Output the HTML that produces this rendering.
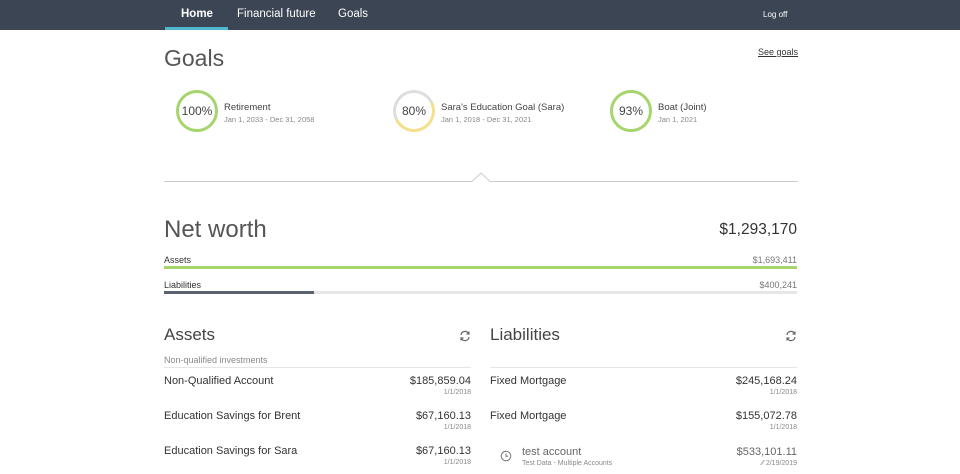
<!DOCTYPE html>
<html><head><style>
*{margin:0;padding:0;box-sizing:border-box}
body{width:960px;height:474px;overflow:hidden;background:#fff;font-family:"Liberation Sans",sans-serif;color:#333;position:relative}
.a{position:absolute;white-space:nowrap}
nav{position:absolute;left:0;top:0;width:960px;height:30px;background:#3b4553}
nav span{position:absolute;top:8px;font-size:11.5px;color:#fff}
.circ{position:absolute;width:42px;height:42px;border-radius:50%;border:3px solid #a6d56e;font-size:12px;color:#444;text-align:center;line-height:36px}
.gt{font-size:9.5px;color:#444}
.gs{font-size:7.5px;color:#888}
.amt{font-size:11px;color:#333}
.dt{font-size:7px;color:#888}
.nm{font-size:11px;color:#333}
</style></head><body>
<nav>
<span style="left:181px;font-weight:bold">Home</span>
<span style="left:237px">Financial future</span>
<span style="left:338px">Goals</span>
<span style="left:763px;font-size:8px;top:10px">Log off</span>
<div class="a" style="left:165px;top:27px;width:63px;height:3px;background:#4fb8d0"></div>
</nav>
<div class="a" style="left:164px;top:45px;font-size:23px;color:#555">Goals</div>
<div class="a" style="left:758px;top:47px;font-size:9px;text-decoration:underline;color:#333">See goals</div>

<div class="circ" style="left:176px;top:90px">100%</div>
<div class="a gt" style="left:224px;top:102px">Retirement</div>
<div class="a gs" style="left:224px;top:115px">Jan 1, 2033 - Dec 31, 2058</div>
<div class="circ" style="left:393px;top:90px;border-color:#f5df8a;border-left-color:#ddd;border-top-color:#ddd;transform:rotate(20deg)"><span style="display:inline-block;transform:rotate(-20deg)">80%</span></div>
<div class="a gt" style="left:441px;top:102px">Sara's Education Goal (Sara)</div>
<div class="a gs" style="left:441px;top:115px">Jan 1, 2018 - Dec 31, 2021</div>
<div class="circ" style="left:610px;top:90px">93%</div>
<div class="a gt" style="left:658px;top:102px">Boat (Joint)</div>
<div class="a gs" style="left:658px;top:115px">Jan 1, 2021</div>

<svg class="a" style="left:164px;top:170px" width="634" height="14"><polyline points="0,11.5 308,11.5 317,3 326,11.5 634,11.5" fill="none" stroke="#ccc" stroke-width="1"/></svg>

<div class="a" style="left:164px;top:216px;font-size:24px;color:#555">Net worth</div>
<div class="a" style="right:163px;top:221px;font-size:15.5px;color:#333">$1,293,170</div>
<div class="a" style="left:164px;top:255px;font-size:9px">Assets</div>
<div class="a" style="right:163px;top:255px;font-size:9px;color:#777">$1,693,411</div>
<div class="a" style="left:164px;top:266px;width:633px;height:3px;background:#a6d56e"></div>
<div class="a" style="left:164px;top:280px;font-size:9px">Liabilities</div>
<div class="a" style="right:163px;top:280px;font-size:9px;color:#777">$400,241</div>
<div class="a" style="left:164px;top:291px;width:633px;height:3px;background:#e6e6e6"></div>
<div class="a" style="left:164px;top:291px;width:150px;height:3px;background:#5b6370"></div>

<div class="a" style="left:164px;top:325px;font-size:17px;color:#444">Assets</div>
<div class="a" style="left:490px;top:325px;font-size:17px;color:#444">Liabilities</div>
<svg class="a" style="left:459px;top:330px" width="12" height="12" viewBox="0 0 12 12"><path d="M2 5A4 4 0 0 1 9.5 3.5M10 7A4 4 0 0 1 2.5 8.5" fill="none" stroke="#666" stroke-width="1.2"/><path d="M10 1.5V4H7.5M2 10.5V8H4.5" fill="none" stroke="#666" stroke-width="1.2"/></svg>
<svg class="a" style="left:785px;top:330px" width="12" height="12" viewBox="0 0 12 12"><path d="M2 5A4 4 0 0 1 9.5 3.5M10 7A4 4 0 0 1 2.5 8.5" fill="none" stroke="#666" stroke-width="1.2"/><path d="M10 1.5V4H7.5M2 10.5V8H4.5" fill="none" stroke="#666" stroke-width="1.2"/></svg>

<div class="a" style="left:164px;top:355px;font-size:9px;color:#888">Non-qualified investments</div>
<div class="a" style="left:164px;top:367px;width:307px;height:1px;background:#e6e6e6"></div>
<div class="a" style="left:490px;top:367px;width:307px;height:1px;background:#e6e6e6"></div>

<div class="a nm" style="left:164px;top:375px">Non-Qualified Account</div>
<div class="a amt" style="right:489px;top:375px">$185,859.04</div>
<div class="a dt" style="right:489px;top:389px">1/1/2018</div>
<div class="a nm" style="left:164px;top:410px">Education Savings for Brent</div>
<div class="a amt" style="right:489px;top:410px">$67,160.13</div>
<div class="a dt" style="right:489px;top:424px">1/1/2018</div>
<div class="a nm" style="left:164px;top:445px">Education Savings for Sara</div>
<div class="a amt" style="right:489px;top:445px">$67,160.13</div>
<div class="a dt" style="right:489px;top:459px">1/1/2018</div>

<div class="a nm" style="left:490px;top:375px">Fixed Mortgage</div>
<div class="a amt" style="right:163px;top:375px">$245,168.24</div>
<div class="a dt" style="right:163px;top:389px">1/1/2018</div>
<div class="a nm" style="left:490px;top:410px">Fixed Mortgage</div>
<div class="a amt" style="right:163px;top:410px">$155,072.78</div>
<div class="a dt" style="right:163px;top:424px">1/1/2018</div>
<svg class="a" style="left:500px;top:450px" width="12" height="12" viewBox="0 0 12 12"><circle cx="6" cy="6" r="4.8" fill="none" stroke="#777" stroke-width="1"/><path d="M6 3.5V6.3H8" fill="none" stroke="#777" stroke-width="1"/></svg>
<div class="a" style="left:522px;top:446px;font-size:11px;color:#666">test account</div>
<div class="a dt" style="left:522px;top:460px">Test Data - Multiple Accounts</div>
<div class="a amt" style="right:163px;top:446px;color:#666">$533,101.11</div>
<div class="a dt" style="right:163px;top:460px">⁄⁄ 2/19/2019</div>
</body></html>
